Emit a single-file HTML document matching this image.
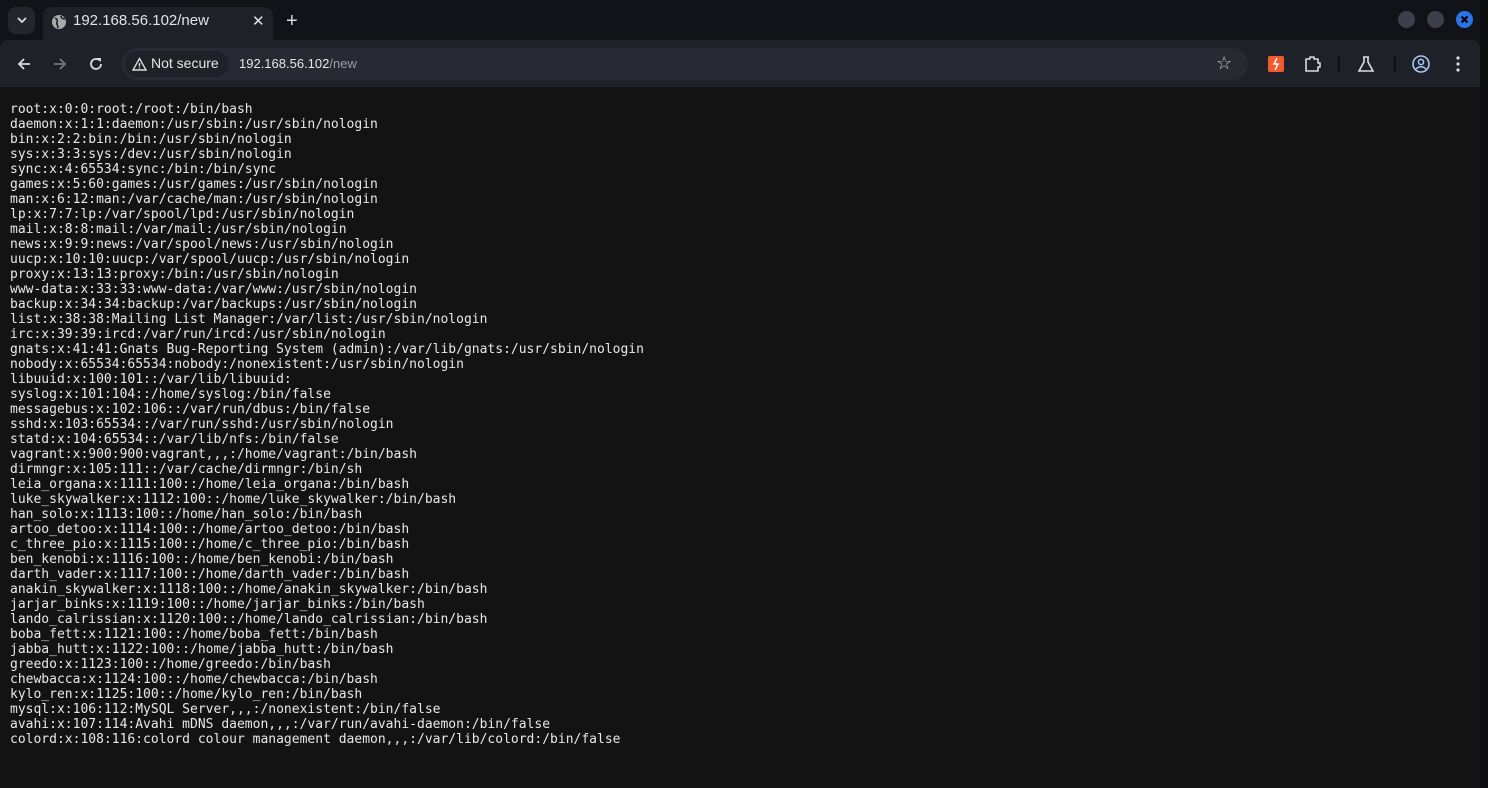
<!DOCTYPE html>
<html><head><meta charset="utf-8"><style>
*{margin:0;padding:0;box-sizing:border-box}
body{width:1488px;height:788px;background:#0d0d10;overflow:hidden;font-family:"Liberation Sans",sans-serif;position:relative}
#win{position:absolute;left:0;top:0;width:1480px;height:788px;background:#121318}
#tab{position:absolute;left:43px;top:7px;width:230px;height:34px;background:#1f2129;border-radius:9px 9px 0 0;color:#e3e3e6;font-size:15px}
#toolbar{position:absolute;left:0;top:40px;width:1480px;height:47px;background:#1f2129;border-radius:8px 8px 0 0}
#omni{position:absolute;left:122px;top:8px;width:1126px;height:32px;background:#282a33;border-radius:16px}
#content{position:absolute;left:0;top:87px;width:1479px;height:701px;background:#131313}
pre{position:absolute;left:10px;top:15px;font-family:"DejaVu Sans Mono","Liberation Mono",monospace;font-size:13px;line-height:15px;color:#e8e8e8}
.ic{position:absolute}
</style></head><body>
<div id="win">
 <div style="position:absolute;left:8px;top:7px;width:27px;height:27px;background:#24262e;border-radius:8px"></div>
 <svg class="ic" style="left:16px;top:15px" width="12" height="10"><path d="M2 3l4 4 4-4" stroke="#ddd" stroke-width="1.8" fill="none"/></svg>
 <div id="tab">
  <svg class="ic" style="left:8px;top:7px" width="16" height="16" viewBox="0 0 16 16"><circle cx="8" cy="8" r="7" fill="#aaa"/><path d="M4 4c2 1 3 2 2 4s1 3 1 6M10 2c0 2 2 3 4 3" stroke="#1f2129" stroke-width="1.6" fill="none"/></svg>
  <span style="position:absolute;left:30px;top:5px">192.168.56.102/new</span>
  <span style="position:absolute;left:209px;top:5px;font-size:15px">✕</span>
 </div>
 <span style="position:absolute;left:286px;top:10px;color:#ddd;font-size:20px">+</span>
 <div style="position:absolute;left:1398px;top:11px;width:17px;height:17px;border-radius:50%;background:#3b404c"></div>
 <div style="position:absolute;left:1427px;top:11px;width:17px;height:17px;border-radius:50%;background:#3b404c"></div>
 <div style="position:absolute;left:1456px;top:11px;width:17px;height:17px;border-radius:50%;background:#2b74e8"></div>
 <svg class="ic" style="left:1459px;top:14px" width="11" height="11"><path d="M2.5 2.5l6 6M8.5 2.5l-6 6" stroke="#000" stroke-width="2.2"/></svg>
 <div id="toolbar">
  <svg class="ic" style="left:16px;top:16px" width="16" height="16"><path d="M14 8H3M8 3L3 8l5 5" stroke="#ddd" stroke-width="1.8" fill="none"/></svg>
  <svg class="ic" style="left:52px;top:16px" width="16" height="16"><path d="M2 8h11M8 3l5 5-5 5" stroke="#777" stroke-width="1.8" fill="none"/></svg>
  <svg class="ic" style="left:88px;top:16px" width="16" height="16"><path d="M13 8a5 5 0 1 1-1.5-3.6" stroke="#ddd" stroke-width="1.8" fill="none"/><path d="M9 2h4v4z" fill="#ddd"/></svg>
  <div id="omni">
   <div style="position:absolute;left:3px;top:3px;width:104px;height:26px;background:#1f2129;border-radius:13px"></div>
   <svg class="ic" style="left:10px;top:9px" width="15" height="14"><path d="M7.5 1.5L14 13H1z" stroke="#ddd" stroke-width="1.4" fill="none"/><path d="M7.5 6v3.5M7.5 10.5v1" stroke="#ddd" stroke-width="1.4"/></svg>
   <span style="position:absolute;left:29px;top:7px;color:#e6e6e6;font-size:14px">Not secure</span>
   <span style="position:absolute;left:117px;top:8px;color:#e6e6e6;font-size:13px">192.168.56.102<span style="color:#9a9ca3">/new</span></span>
   <span style="position:absolute;left:1094px;top:5px;color:#ccc;font-size:18px">☆</span>
  </div>
  <div style="position:absolute;left:1268px;top:16px;width:16px;height:16px;background:#f25a2c;border-radius:2px"></div>
  <svg class="ic" style="left:1268px;top:16px" width="16" height="16"><path d="M9 2L6 8h4l-3 6" stroke="#fff" stroke-width="1.4" fill="none"/></svg>
  <svg class="ic" style="left:1303px;top:14px" width="20" height="20"><path d="M3 5h4V3h4v2h4v4h2v4h-2v4H3z" stroke="#ddd" stroke-width="1.6" fill="none" stroke-linejoin="round"/></svg>
  <div style="position:absolute;left:1338px;top:16px;width:2px;height:16px;background:#111"></div>
  <svg class="ic" style="left:1356px;top:14px" width="20" height="20"><path d="M7 3h6M8 3v5l-5 9h14l-5-9V3" stroke="#ddd" stroke-width="1.6" fill="none"/></svg>
  <div style="position:absolute;left:1394px;top:16px;width:2px;height:16px;background:#111"></div>
  <svg class="ic" style="left:1411px;top:14px" width="20" height="20"><circle cx="10" cy="10" r="8" stroke="#a8c7fa" stroke-width="1.6" fill="none"/><circle cx="10" cy="8" r="2.6" stroke="#a8c7fa" stroke-width="1.5" fill="none"/><path d="M5 15c3-3 7-3 10 0" stroke="#a8c7fa" stroke-width="1.5" fill="none"/></svg>
  <svg class="ic" style="left:1454px;top:15px" width="8" height="18"><circle cx="4" cy="3" r="1.6" fill="#ddd"/><circle cx="4" cy="9" r="1.6" fill="#ddd"/><circle cx="4" cy="15" r="1.6" fill="#ddd"/></svg>
 </div>
 <div id="content"><pre>root:x:0:0:root:/root:/bin/bash
daemon:x:1:1:daemon:/usr/sbin:/usr/sbin/nologin
bin:x:2:2:bin:/bin:/usr/sbin/nologin
sys:x:3:3:sys:/dev:/usr/sbin/nologin
sync:x:4:65534:sync:/bin:/bin/sync
games:x:5:60:games:/usr/games:/usr/sbin/nologin
man:x:6:12:man:/var/cache/man:/usr/sbin/nologin
lp:x:7:7:lp:/var/spool/lpd:/usr/sbin/nologin
mail:x:8:8:mail:/var/mail:/usr/sbin/nologin
news:x:9:9:news:/var/spool/news:/usr/sbin/nologin
uucp:x:10:10:uucp:/var/spool/uucp:/usr/sbin/nologin
proxy:x:13:13:proxy:/bin:/usr/sbin/nologin
www-data:x:33:33:www-data:/var/www:/usr/sbin/nologin
backup:x:34:34:backup:/var/backups:/usr/sbin/nologin
list:x:38:38:Mailing List Manager:/var/list:/usr/sbin/nologin
irc:x:39:39:ircd:/var/run/ircd:/usr/sbin/nologin
gnats:x:41:41:Gnats Bug-Reporting System (admin):/var/lib/gnats:/usr/sbin/nologin
nobody:x:65534:65534:nobody:/nonexistent:/usr/sbin/nologin
libuuid:x:100:101::/var/lib/libuuid:
syslog:x:101:104::/home/syslog:/bin/false
messagebus:x:102:106::/var/run/dbus:/bin/false
sshd:x:103:65534::/var/run/sshd:/usr/sbin/nologin
statd:x:104:65534::/var/lib/nfs:/bin/false
vagrant:x:900:900:vagrant,,,:/home/vagrant:/bin/bash
dirmngr:x:105:111::/var/cache/dirmngr:/bin/sh
leia_organa:x:1111:100::/home/leia_organa:/bin/bash
luke_skywalker:x:1112:100::/home/luke_skywalker:/bin/bash
han_solo:x:1113:100::/home/han_solo:/bin/bash
artoo_detoo:x:1114:100::/home/artoo_detoo:/bin/bash
c_three_pio:x:1115:100::/home/c_three_pio:/bin/bash
ben_kenobi:x:1116:100::/home/ben_kenobi:/bin/bash
darth_vader:x:1117:100::/home/darth_vader:/bin/bash
anakin_skywalker:x:1118:100::/home/anakin_skywalker:/bin/bash
jarjar_binks:x:1119:100::/home/jarjar_binks:/bin/bash
lando_calrissian:x:1120:100::/home/lando_calrissian:/bin/bash
boba_fett:x:1121:100::/home/boba_fett:/bin/bash
jabba_hutt:x:1122:100::/home/jabba_hutt:/bin/bash
greedo:x:1123:100::/home/greedo:/bin/bash
chewbacca:x:1124:100::/home/chewbacca:/bin/bash
kylo_ren:x:1125:100::/home/kylo_ren:/bin/bash
mysql:x:106:112:MySQL Server,,,:/nonexistent:/bin/false
avahi:x:107:114:Avahi mDNS daemon,,,:/var/run/avahi-daemon:/bin/false
colord:x:108:116:colord colour management daemon,,,:/var/lib/colord:/bin/false</pre></div>
</div>
</body></html>
